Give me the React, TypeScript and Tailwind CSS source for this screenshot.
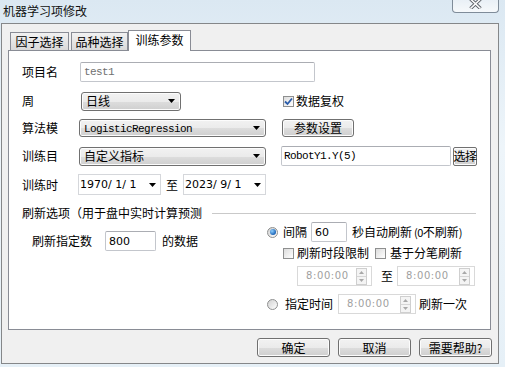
import type { ReactNode } from 'react';

const btn =
  'flex items-center justify-center whitespace-nowrap rounded-[3px] border border-[#707070] bg-[linear-gradient(#f2f2f2_0%,#ebebeb_50%,#dddddd_51%,#cfcfcf_100%)] shadow-[inset_0_0_0_1px_#fcfcfc] text-[12px] leading-none';

function Arrow() {
  return (
    <svg width="7" height="4" viewBox="0 0 7 4" className="shrink-0">
      <path d="M0 0H7L3.5 4Z" fill="#000" />
    </svg>
  );
}

function Combo({ w, h, children }: { w: string; h: string; children: ReactNode }) {
  return (
    <div className={`${btn} ${w} ${h} !justify-between pl-[4px] pr-[5px]`}>
      <span className="leading-none">{children}</span>
      <Arrow />
    </div>
  );
}

function DateBox({ text }: { text: string }) {
  return (
    <div className="flex items-center w-[83px] h-[21px] border border-[#d5d7db] bg-white pl-[1px] pr-[4px]">
      <span className="font-['DejaVu_Sans',sans-serif] text-[11px] leading-none whitespace-pre">{text}</span>
      <span className="ml-auto"><Arrow /></span>
    </div>
  );
}

function Check({ checked }: { checked?: boolean }) {
  return (
    <div className="w-[11px] h-[11px] shrink-0 border border-[#8e8f8f] bg-[linear-gradient(135deg,#dcdcdc,#ffffff)] flex items-center justify-center">
      {checked && (
        <svg width="9" height="9" viewBox="0 0 9 9">
          <path d="M1 4.5L3.5 7L8 1.5" fill="none" stroke="#2a5caa" strokeWidth="1.8" />
        </svg>
      )}
    </div>
  );
}

function Radio({ on }: { on?: boolean }) {
  return (
    <div className="w-[11px] h-[11px] shrink-0 rounded-full border border-[#8e8f8f] bg-[linear-gradient(135deg,#d0d0d0,#ffffff)] flex items-center justify-center">
      {on && <div className="w-[6px] h-[6px] rounded-full bg-[radial-gradient(circle_at_35%_35%,#8fd0ff,#1b64b8_70%,#0b3f80)]" />}
    </div>
  );
}

function Spin({ w }: { w: string }) {
  return (
    <div className={`flex items-center ${w} h-[20px] border border-[#d9d9d9] bg-white pl-[8px] pr-[4px]`}>
      <span className="font-['DejaVu_Sans',sans-serif] text-[10px] leading-none text-[#a0a0a0] tracking-[0.6px]">8:00:00</span>
      <div className="ml-auto flex flex-col w-[11px] h-[17px] border border-[#cfcfcf] bg-[#f4f4f4]">
        <div className="flex-1 flex items-center justify-center border-b border-[#d6d6d6]">
          <svg width="5" height="3" viewBox="0 0 5 3"><path d="M0 3H5L2.5 0Z" fill="#a8a8a8" /></svg>
        </div>
        <div className="flex-1 flex items-center justify-center">
          <svg width="5" height="3" viewBox="0 0 5 3"><path d="M0 0H5L2.5 3Z" fill="#a8a8a8" /></svg>
        </div>
      </div>
    </div>
  );
}

const input = 'flex items-center border border-[#c3c6cc] border-t-[#abadb3] bg-white rounded-[2px]';

export default function App() {
  return (
    <div className="w-[505px] h-[367px] overflow-hidden bg-[linear-gradient(180deg,#dbe8f2_0%,#eef5fa_40%,#e6f0f7_100%)] font-['Noto_Sans_CJK_SC',sans-serif] text-[12px] text-black leading-none">
      {/* title bar */}
      <div className="flex h-[23px]">
        <span className="pl-[3px] pt-[5px] text-[12px] text-[#111]">机器学习项修改</span>
        <div className="ml-auto mr-[6px] w-[47px] h-[13px] border border-t-0 border-[#7f8c99] rounded-b-[4px] bg-[linear-gradient(#e9f0f6,#f6f9fb)] flex justify-center">
          <svg width="13" height="9" viewBox="0 0 13 9">
            <path d="M1.5 -1L11.5 8.5M11.5 -1L1.5 8.5" stroke="#5a5f66" strokeWidth="3.4" />
            <path d="M1.5 -1L11.5 8.5M11.5 -1L1.5 8.5" stroke="#fbfbfb" strokeWidth="1.6" />
          </svg>
        </div>
      </div>

      {/* window body */}
      <div className="ml-[1px] w-[498px] h-[341px] border border-[#858789] bg-[#f0f0f0] flex flex-col">
        {/* tabs */}
        <div className="flex items-end ml-[8px] mt-[6px] h-[20px] relative z-10">
          <div className="w-[59px] h-[18px] border border-b-0 border-[#898c95] bg-[linear-gradient(#f2f2f2,#d9d9d9)] flex items-center justify-center">因子选择</div>
          <div className="ml-[2px] w-[57px] h-[18px] border border-b-0 border-[#898c95] bg-[linear-gradient(#f2f2f2,#d9d9d9)] flex items-center justify-center">品种选择</div>
          <div className="w-[63px] h-[21px] -mb-[1px] border border-b-0 border-[#898c95] bg-white flex items-center justify-center pb-[2px]">训练参数</div>
        </div>

        {/* panel */}
        <div className="ml-[6px] w-[483px] h-[280px] border border-[#898c95] bg-white">
          <div className="pl-[13px] pt-[11px]">
            <div className="flex items-center h-[20px]">
              <span className="w-[58px]">项目名</span>
              <div className={`${input} w-[235px] h-[20px] pl-[3px]`}>
                <span className="font-['Liberation_Mono',monospace] text-[11px] tracking-[-0.6px] text-[#707070]">test1</span>
              </div>
            </div>

            <div className="flex items-center h-[20px] mt-[9px]">
              <span className="w-[59px]">周</span>
              <Combo w="w-[100px]" h="h-[19px]">日线</Combo>
              <div className="ml-[102px] flex items-center">
                <Check checked />
                <span className="ml-[2px]">数据复权</span>
              </div>
            </div>

            <div className="flex items-center h-[20px] mt-[7px]">
              <span className="w-[57px]">算法模</span>
              <Combo w="w-[187px]" h="h-[18px]">
                <span className="font-['Liberation_Mono',monospace] text-[11px] tracking-[-0.6px]">LogisticRegression</span>
              </Combo>
              <div className={`${btn} ml-[16px] w-[72px] h-[18px]`}>参数设置</div>
            </div>

            <div className="flex items-center h-[20px] mt-[8px]">
              <span className="w-[57px]">训练目</span>
              <Combo w="w-[187px]" h="h-[19px]">自定义指标</Combo>
              <div className={`${input} ml-[15px] w-[170px] h-[20px] pl-[2px]`}>
                <span className="font-['Liberation_Mono',monospace] text-[11px] tracking-[-0.6px]">RobotY1.Y(5)</span>
              </div>
              <div className={`${btn} ml-[2px] w-[24px] h-[19px] !rounded-[2px] text-[11px] tracking-[-0.5px]`}>选择</div>
            </div>

            <div className="flex items-center h-[21px] mt-[8px]">
              <span className="w-[56px]">训练时</span>
              <DateBox text="1970/ 1/ 1" />
              <span className="ml-[5px] w-[12px]">至</span>
              <span className="ml-[5px]"><DateBox text="2023/ 9/ 1" /></span>
            </div>

            <div className="flex items-center h-[14px] mt-[11px] mr-[14px]">
              <span>刷新选项（用于盘中实时计算预测</span>
              <div className="ml-[10px] flex-1 h-[1px] bg-[#c9c9c9]" />
            </div>

            <div className="flex">
              <div className="w-[245px] pl-[10px]">
                <div className="flex items-center h-[20px] mt-[11px]">
                  <span className="w-[73px]">刷新指定数</span>
                  <div className={`${input} w-[51px] h-[20px] pl-[3px]`}>
                    <span className="font-['DejaVu_Sans',sans-serif] text-[11px]">800</span>
                  </div>
                  <span className="ml-[6px]">的数据</span>
                </div>
              </div>

              <div className="flex flex-col">
                <div className="flex items-center h-[20px] mt-[2px]">
                  <Radio on />
                  <span className="ml-[5px] w-[28px]">间隔</span>
                  <div className={`${input} w-[36px] h-[20px] pl-[3px]`}>
                    <span className="font-['DejaVu_Sans',sans-serif] text-[11px]">60</span>
                  </div>
                  <span className="ml-[5px] whitespace-nowrap">
                    秒自动刷新<span className="text-[11px] tracking-[-0.5px]"> (0</span>不刷新<span className="text-[11px]">)</span>
                  </span>
                </div>
                <div className="flex items-center h-[14px] mt-[4px] pl-[16px]">
                  <Check />
                  <span className="ml-[3px]">刷新时段限制</span>
                  <span className="ml-[6px]"><Check /></span>
                  <span className="ml-[4px]">基于分笔刷新</span>
                </div>
                <div className="flex items-center h-[20px] mt-[6px] pl-[30px]">
                  <Spin w="w-[75px]" />
                  <span className="ml-[9px] w-[11px]">至</span>
                  <span className="ml-[5px]"><Spin w="w-[78px]" /></span>
                </div>
                <div className="flex items-center h-[20px] mt-[8px]">
                  <Radio />
                  <span className="ml-[7px] w-[48px]">指定时间</span>
                  <span className="ml-[5px]"><Spin w="w-[78px]" /></span>
                  <span className="ml-[3px]">刷新一次</span>
                </div>
              </div>
            </div>
          </div>
        </div>

        {/* buttons */}
        <div className="flex justify-end gap-[8px] mt-[8px] pr-[6px]">
          <div className={`${btn} w-[73px] h-[19px]`}>确定</div>
          <div className={`${btn} w-[73px] h-[19px]`}>取消</div>
          <div className={`${btn} w-[73px] h-[19px]`}>需要帮助?</div>
        </div>
      </div>
    </div>
  );
}
